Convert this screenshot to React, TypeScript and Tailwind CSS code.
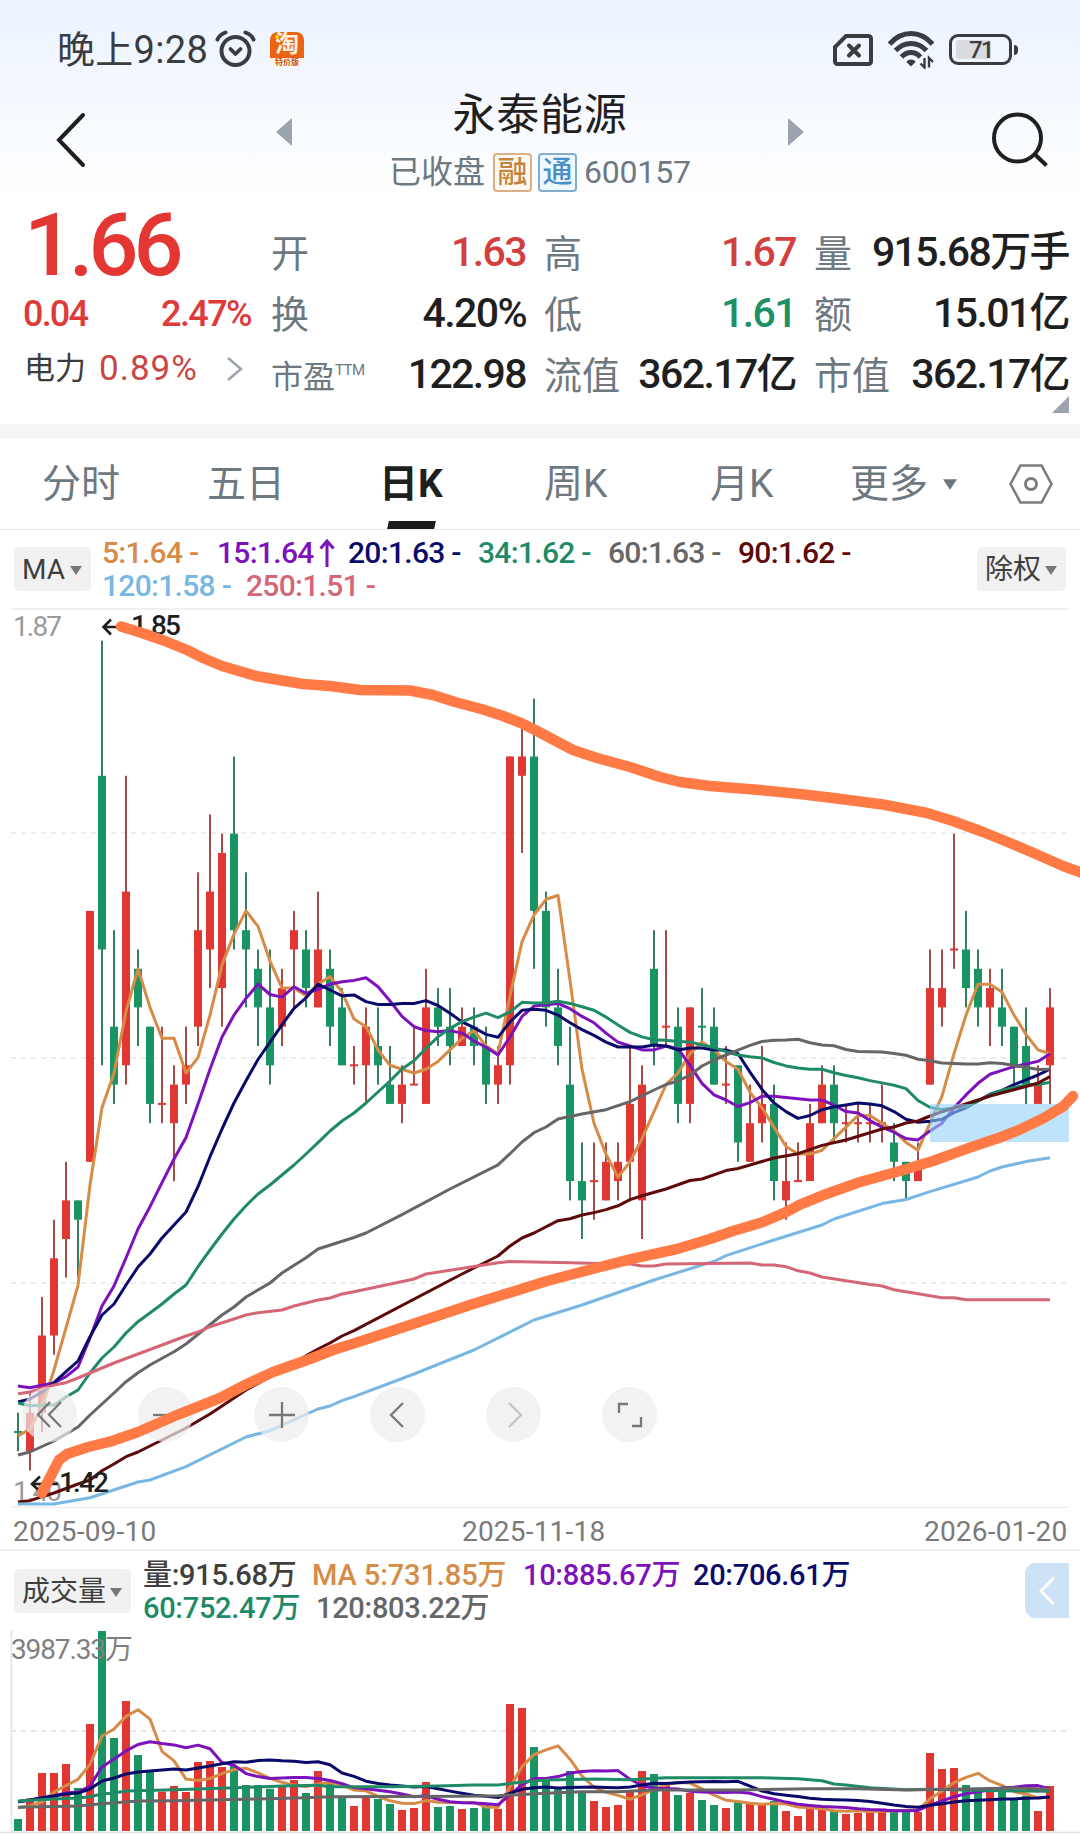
import { type ReactNode } from "react";
import clsx from "clsx";

type Candle = [
  color: "r" | "g",
  high: number,
  top: number,
  bottom: number,
  low: number
];
type Point = [index: number, y: number];

// prices are in fen, one entry for each trading day
const CANDLES: Candle[] = [
  ["g", 145, 144, 144, 143],
  ["r", 146, 145, 143, 142],
  ["r", 151, 149, 145, 144],
  ["r", 155, 153, 149, 148],
  ["r", 158, 156, 154, 152],
  ["g", 156, 156, 155, 152],
  ["r", 171, 171, 158, 158],
  ["g", 185, 178, 169, 163],
  ["g", 170, 165, 162, 161],
  ["r", 178, 172, 163, 162],
  ["g", 169, 168, 166, 164],
  ["g", 165, 165, 161, 160],
  ["r", 165, 161, 161, 160],
  ["r", 163, 162, 160, 157],
  ["r", 165, 163, 162, 161],
  ["r", 173, 170, 165, 164],
  ["r", 176, 172, 169, 167],
  ["r", 175, 174, 167, 165],
  ["g", 179, 175, 170, 169],
  ["g", 173, 170, 169, 166],
  ["g", 169, 168, 166, 164],
  ["g", 169, 166, 163, 162],
  ["r", 168, 167, 165, 164],
  ["r", 171, 170, 169, 166],
  ["g", 170, 169, 167, 166],
  ["r", 172, 169, 166, 166],
  ["g", 169, 168, 165, 164],
  ["g", 167, 166, 163, 163],
  ["r", 164, 163, 163, 162],
  ["r", 166, 165, 163, 161],
  ["g", 166, 164, 163, 162],
  ["g", 164, 162, 161, 161],
  ["r", 163, 162, 161, 160],
  ["r", 165, 162, 162, 162],
  ["r", 168, 166, 161, 161],
  ["g", 167, 166, 165, 164],
  ["g", 167, 165, 164, 163],
  ["r", 166, 165, 164, 164],
  ["g", 166, 165, 164, 163],
  ["g", 165, 164, 162, 161],
  ["r", 164, 163, 162, 161],
  ["r", 179, 179, 163, 162],
  ["r", 181, 179, 178, 174],
  ["g", 182, 179, 171, 168],
  ["g", 172, 171, 166, 165],
  ["g", 168, 166, 164, 163],
  ["g", 165, 162, 157, 156],
  ["g", 159, 157, 156, 154],
  ["r", 159, 157, 157, 155],
  ["r", 159, 158, 156, 156],
  ["r", 159, 158, 157, 156],
  ["r", 164, 161, 158, 156],
  ["r", 163, 162, 156, 154],
  ["g", 170, 168, 164, 163],
  ["r", 170, 165, 165, 164],
  ["g", 166, 165, 161, 160],
  ["r", 166, 166, 161, 160],
  ["g", 167, 165, 165, 164],
  ["g", 166, 165, 162, 162],
  ["r", 164, 162, 162, 161],
  ["g", 163, 163, 159, 158],
  ["r", 162, 160, 158, 158],
  ["r", 164, 161, 160, 159],
  ["g", 162, 161, 157, 156],
  ["r", 159, 157, 156, 155],
  ["r", 159, 157, 157, 157],
  ["r", 161, 160, 157, 157],
  ["r", 163, 162, 160, 160],
  ["g", 163, 162, 160, 159],
  ["r", 161, 160, 160, 159],
  ["r", 161, 160, 160, 159],
  ["r", 161, 160, 160, 159],
  ["r", 162, 160, 160, 159],
  ["g", 160, 159, 158, 157],
  ["g", 158, 158, 157, 156],
  ["r", 159, 158, 157, 157],
  ["r", 169, 167, 162, 162],
  ["r", 169, 167, 166, 165],
  ["r", 175, 169, 169, 168],
  ["g", 171, 169, 167, 166],
  ["g", 169, 168, 166, 165],
  ["r", 168, 167, 166, 164],
  ["g", 168, 166, 165, 164],
  ["g", 165, 165, 163, 162],
  ["g", 166, 164, 162, 161],
  ["r", 163, 162, 161, 161],
  ["r", 167, 166, 163, 161],
];

// bar heights in thirds of a pixel
const VOLUMES = [
  36, 98, 174, 174, 201, 129, 321, 600, 279, 390, 228, 181, 118, 135, 117, 207,
  210, 192, 195, 138, 138, 127, 132, 153, 114, 180, 147, 99, 75, 102, 96, 81,
  63, 69, 147, 72, 75, 66, 69, 78, 66, 381, 369, 252, 150, 126, 180, 114, 90,
  72, 78, 123, 180, 171, 145, 108, 114, 93, 78, 69, 90, 87, 78, 90, 60, 45, 77,
  63, 60, 51, 54, 65, 67, 65, 60, 57, 234, 186, 189, 138, 119, 119, 119, 93,
  106, 60, 135,
];

const RED = "#e13733";
const GREEN = "#1b9464";
const CHART_FONT = "Roboto, 'Noto Sans CJK SC', sans-serif";

const xAt = (index: number) => 18 + index * 12;
const priceY = (fen: number) => 640.7 + (185 - fen) * 19.3;
const volumeY = (height: number) => 1831 - height / 3;

const closes = CANDLES.map(([color, , top, bottom]) =>
  color === "r" ? top : bottom
);

const movingAverage = (
  values: number[],
  days: number,
  toY: (value: number) => number
): Point[] =>
  values.slice(days - 1).map((_, i) => {
    const sum = values.slice(i, i + days).reduce((a, b) => a + b, 0);
    return [i + days - 1, toY(sum / days)];
  });

const toPoints = (points: Point[]) =>
  points.map(([i, y]) => `${xAt(i)},${y.toFixed(1)}`).join(" ");

const seq = (...ys: number[]): Point[] => ys.map((y, i) => [i, y]);

const PRICE_LINES: { color: string; points: Point[] }[] = [
  {
    color: "#d68b47",
    points: [
      ...seq(1436, 1429, 1407, 1370),
      ...movingAverage(closes, 5, priceY),
    ],
  },
  {
    color: "#7d12bd",
    points: [
      ...seq(
        1386, 1387.7, 1385.3, 1383, 1376.7, 1367, 1338, 1306, 1286, 1258, 1229,
        1206.7, 1182.7, 1159
      ),
      ...movingAverage(closes, 15, priceY),
    ],
  },
  {
    color: "#0a0a6b",
    points: [
      ...seq(
        1402, 1399, 1392, 1382.7, 1371.7, 1361, 1336.7, 1315, 1304, 1285, 1267,
        1254, 1238, 1225, 1212, 1186.7, 1156.7, 1129, 1103
      ),
      ...movingAverage(closes, 20, priceY),
    ],
  },
  {
    color: "#1f8a66",
    points: [
      [0, 1403], [1, 1405.7], [3, 1405], [4, 1397], [5, 1390], [6, 1373],
      [7, 1358], [8, 1347], [9, 1333], [10, 1321.7], [12, 1304], [13, 1294],
      [14, 1285], [15, 1266.7], [16, 1250], [17, 1234], [18, 1219],
      [19, 1205.7], [20, 1194], [21, 1185], [23, 1165], [24, 1154],
      [25, 1142.7], [26, 1131], [27, 1121], [28, 1113], [29, 1103],
      [31, 1081], [32, 1069],
      ...movingAverage(closes, 34, priceY),
    ],
  },
  {
    color: "#666666",
    points: [
      [0, 1455], [1, 1452], [3, 1441], [5, 1427], [6, 1415], [8, 1393],
      [9, 1381.7], [10, 1372.7], [11, 1365], [13, 1351.7], [14, 1344],
      [17, 1315], [18, 1307], [19, 1297], [21, 1283], [22, 1273], [24, 1257.7],
      [25, 1249], [28, 1237.5], [29, 1233], [32, 1214.6], [36, 1189],
      [40, 1164.8], [41, 1153.7], [42, 1142], [43, 1132.7], [44, 1127],
      [45, 1119], [47, 1114], [49, 1109.7], [51, 1101.7], [53, 1090],
      [54, 1084.5], [55, 1081], [56, 1075], [57, 1066], [58, 1060],
      ...movingAverage(closes, 60, priceY),
    ],
  },
  {
    color: "#5e0a0a",
    points: [
      [0, 1502], [1, 1500.7], [2, 1496.7], [3, 1493], [5, 1484], [6, 1480],
      [7, 1470.7], [8, 1464], [9, 1456.7], [10, 1452], [14, 1428], [16, 1414],
      [19, 1390], [21, 1377], [24, 1355.7], [25, 1349], [26, 1343], [27, 1336],
      [28, 1330.7], [37, 1274], [38, 1268], [40, 1256], [41, 1246], [42, 1238],
      [43, 1233], [45, 1220.7], [46, 1218.8], [47, 1215], [48, 1212.6],
      [49, 1209.6], [50, 1205.8], [51, 1199.6], [52, 1195.8], [54, 1189],
      [56, 1180.5], [57, 1179], [59, 1170.6], [60, 1168.5], [63, 1158],
      [65, 1153.7], [67, 1145.4], [69, 1140], [72, 1129], [73, 1127],
      [74, 1123], [75, 1121], [76, 1116], [77, 1111.7], [80, 1100],
      [81, 1096], [84, 1086.5], [85, 1083], [86, 1076.6],
    ],
  },
  {
    color: "#78b7e3",
    points: [
      [0, 1504], [3, 1504], [6, 1497.7], [10, 1482], [11, 1480], [14, 1466.7],
      [19, 1437], [21, 1430.7], [25, 1409], [26, 1406], [27, 1400.7],
      [28, 1396.7], [33, 1374], [38, 1350], [43, 1320], [47, 1305], [53, 1280],
      [57, 1265], [58, 1261.5], [59, 1255.6], [63, 1240], [67, 1225],
      [68, 1219], [72, 1203.6], [74, 1199.5], [76, 1191.6], [80, 1177],
      [81, 1171], [82, 1167], [84, 1161.6], [86, 1157.8],
    ],
  },
  {
    color: "#d56678",
    points: [
      [0, 1393.7], [1, 1392], [3, 1385], [4, 1382.7], [5, 1378], [8, 1363],
      [14, 1336], [15, 1332], [16, 1326.7], [19, 1315], [20, 1312.7],
      [22, 1310], [23, 1306], [25, 1300], [26, 1298], [27, 1294],
      [28, 1291.7], [33, 1279], [34, 1274], [40, 1262.8], [41, 1261.6],
      [46, 1262.8], [50, 1264], [51, 1264], [52, 1266], [53, 1266],
      [54, 1264], [61, 1263], [62, 1265], [63, 1265], [64, 1266.7],
      [65, 1270.8], [66, 1273], [67, 1277], [71, 1284.6], [72, 1286],
      [73, 1289.8], [77, 1297.7], [78, 1297.7], [79, 1299.7], [86, 1299.7],
    ],
  },
];

const VOLUME_LINES: { color: string; points: Point[] }[] = [
  {
    color: "#d68b47",
    points: [
      ...seq(1807.7, 1806, 1802, 1792),
      ...movingAverage(VOLUMES, 5, volumeY),
    ],
  },
  {
    color: "#7d12bd",
    points: [
      ...seq(1801.7, 1800, 1797.7, 1795.7, 1793, 1792, 1786, 1767, 1759),
      ...movingAverage(VOLUMES, 10, volumeY),
    ],
  },
  {
    color: "#0a0a6b",
    points: [
      ...seq(
        1801.7, 1800, 1798, 1796, 1794, 1793, 1789, 1781, 1778, 1774, 1772,
        1771, 1770, 1769, 1770, 1768, 1766, 1763.7, 1761.7
      ),
      ...movingAverage(VOLUMES, 20, volumeY),
    ],
  },
  {
    color: "#1f8a66",
    points: [
      [0, 1801], [3, 1799], [5, 1798], [6, 1796.7], [7, 1794], [8, 1793],
      [9, 1791], [13, 1789.7], [15, 1789], [20, 1787], [22, 1786],
      [25, 1785.3], [26, 1786.7], [31, 1786.7], [35, 1786], [38, 1785],
      [40, 1785], [42, 1782], [44, 1780], [48, 1779], [51, 1779.7],
      [54, 1777.7], [62, 1777.7], [65, 1778.7], [67, 1780.7], [68, 1784],
      [69, 1785], [71, 1787.7], [74, 1789.7], [76, 1789.3], [82, 1790.7],
      [86, 1791.3],
    ],
  },
  {
    color: "#666666",
    points: [
      [0, 1807.3], [5, 1806], [7, 1803.7], [10, 1801], [13, 1800.7],
      [20, 1799], [24, 1797.7], [26, 1796.7], [37, 1796.3], [40, 1795.7],
      [44, 1793.3], [47, 1791.7], [50, 1791.7], [53, 1790], [60, 1790],
      [66, 1788.7], [70, 1788.7], [74, 1790], [80, 1788.7], [83, 1788],
      [86, 1789.3],
    ],
  },
];

// hand drawn trend lines
const TREND_TOP =
  "121,626.5 142,633 165,641 187,650 203,658 222,666 256,676 282,680.5 303,684 330,686 360,690 410,690.5 433,695 455,702 483,709.5 503,716 522,723.5 537,731 553,739.5 573,750 597,758 630,767 660,777 680,782 710,786 760,790 800,794 833,798 883,804.5 927,813 953,821 983,832 1010,843 1037,854.5 1063,866 1084,873.5";
const TREND_BOTTOM =
  "42,1493 59,1460 67,1454 88,1447 110,1441.7 138,1432 173,1416.7 220,1398 247,1384 273,1372 310,1359 333,1350 360,1341.5 410,1325 470,1305 547,1281 600,1267 633,1258.6 677,1249 710,1239 733,1231 763,1222 787,1211.6 800,1204.7 827,1193.7 860,1182 900,1171 933,1161 967,1148.6 1000,1137.5 1020,1129.6 1043,1118.6 1063,1106.6 1073,1096";

const Caret = ({ className }: { className?: string }) => (
  <svg viewBox="0 0 12 9" className={clsx("h-[9px] w-3", className)}>
    <path d="M0 0h12L6 9z" fill="currentColor" />
  </svg>
);

const StatusBar = () => (
  <div className="flex h-[98px] items-center justify-between pl-[57px] pr-[62px] text-[#3b3c3f]">
    <div className="flex items-center">
      <span className="w-[153px] whitespace-nowrap pt-[2px] text-[38px] leading-[48px] tracking-[0.3px]">
        晚上9:28
      </span>
      <svg viewBox="0 0 42 40" className="ml-1 h-10 w-[42px]" fill="none">
        <circle cx="21.5" cy="22" r="14" stroke="#3b3c3f" strokeWidth="4" />
        <path
          d="M3.500 10.500c1-3 4-5.500 8-7M39.500 10.500c-1-3-4-5.500-8-7"
          stroke="#3b3c3f"
          strokeWidth="4"
          strokeLinecap="round"
        />
        <path
          d="M16.500 20l5 5 5-5"
          stroke="#3b3c3f"
          strokeWidth="3.800"
          strokeLinecap="round"
          strokeLinejoin="round"
        />
      </svg>
      <div className="ml-[14px] flex h-[35px] w-[34px] flex-col rounded-lg bg-[#fff3e8] text-center">
        <div className="relative h-[26px] rounded-t-lg bg-[#ea6213] text-[24px] font-bold leading-[25px] text-[#fff2dc]">
          淘
          <span className="absolute left-[5px] top-[3px] h-1 w-1 rounded-full bg-[#ffe100]"></span>
        </div>
        <span className="whitespace-nowrap text-[8px] font-bold leading-[9px] text-[#c1560f]">
          特价版
        </span>
      </div>
    </div>
    <div className="flex items-center pt-[1px]">
      <svg viewBox="0 0 40 32" className="h-8 w-10" fill="none">
        <path
          d="M13 2h22.500a2.500 2.500 0 0 1 2.500 2.500v23a2.500 2.500 0 0 1-2.500 2.500h-31A2.500 2.500 0 0 1 2 27.500V13z"
          stroke="#3b3c3f"
          strokeWidth="4"
        />
        <path
          d="M16 11.500l10 10M26 11.500l-10 10"
          stroke="#3b3c3f"
          strokeWidth="4"
          strokeLinecap="round"
        />
      </svg>
      <svg viewBox="0 0 46 38" className="ml-[15px] h-[38px] w-[46px]" fill="none">
        <g stroke="#3b3c3f" strokeWidth="5">
          <path d="M1.500 13C14-1 32-1 44.500 13" />
          <path d="M7.500 19.500C16.500 10 29.500 10 38.500 19.500" />
          <path d="M13.500 26c5.500-6 13.500-6 19 0" />
        </g>
        <path d="M23 28.500c2.500 0 4 1 4.500 2.500L23 35.500 18.500 31c.5-1.500 2-2.500 4.500-2.500z" fill="#3b3c3f" />
        <path
          d="M36.500 27v9.500l-4-4M41 36.500V27l4 4"
          stroke="#3b3c3f"
          strokeWidth="2.400"
        />
      </svg>
      <div className="ml-[15px] flex h-[31px] w-[63px] items-center rounded-[9px] border-[3px] border-[#3b3c3f] p-[4px]">
        <div className="relative h-[19px] w-[35px] rounded-[3px] bg-[#d9dbdf]">
          <span className="absolute left-[13px] top-0 text-[24px] font-medium leading-[20px] tracking-[-2px]">
            71
          </span>
        </div>
      </div>
      <span className="ml-[2px] h-[10px] w-1 rounded-r-sm bg-[#3b3c3f]"></span>
    </div>
  </div>
);

const TitleBar = () => (
  <div className="flex h-[104px] justify-between pl-[56px] pr-[32px]">
    <div className="flex">
      <svg viewBox="0 0 32 56" className="mt-[14px] h-14 w-8" fill="none">
        <path
          d="M27 3L3 28 27 53"
          stroke="#1f1f1f"
          strokeWidth="4"
          strokeLinecap="round"
        />
      </svg>
      <svg viewBox="0 0 16 28" className="ml-[188px] mt-[20px] h-7 w-4">
        <path d="M16 0v28L0 14z" fill="#9ba3ae" />
      </svg>
    </div>
    <div className="flex flex-col items-center">
      <h1 className="-mt-[9px] whitespace-nowrap text-[43px] leading-[52px] tracking-[0.8px] text-[#1f1f1f]">
        永泰能源
      </h1>
      <div className="mt-[11px] flex items-center whitespace-nowrap text-[32px] leading-[40px] text-[#6d7880]">
        <span className="w-[104px]">已收盘</span>
        <span className="flex h-[39px] w-[39px] items-center justify-center rounded-[4px] border-2 border-[#dcae86] bg-[#fef9f2] text-[30px] font-medium text-[#c4843f]">
          融
        </span>
        <span className="ml-[6px] flex h-[39px] w-[39px] items-center justify-center rounded-[4px] border-2 border-[#84acd0] bg-[#eef8ff] text-[30px] font-medium text-[#4b8fc9]">
          通
        </span>
        <span className="ml-[7px] w-[107px] tracking-[-0.2px]">600157</span>
      </div>
    </div>
    <div className="flex">
      <svg viewBox="0 0 16 28" className="mr-[188px] mt-[20px] h-7 w-4">
        <path d="M0 0v28l16-14z" fill="#9ba3ae" />
      </svg>
      <svg viewBox="0 0 56 56" className="mt-[14px] h-14 w-14" fill="none">
        <circle cx="25.500" cy="26" r="23.500" stroke="#1f1f1f" strokeWidth="4" />
        <path d="M42.500 42l12 11.500" stroke="#1f1f1f" strokeWidth="4" />
      </svg>
    </div>
  </div>
);

const Quote = ({
  label,
  value,
  tone = "text-[#1f1f1f]",
}: {
  label: ReactNode;
  value: string;
  tone?: string;
}) => (
  <div className="flex items-center justify-between whitespace-nowrap">
    <span className="text-[38px] text-[#6d7880]">{label}</span>
    <span
      className={clsx(
        "pb-[3px] text-[41px] font-medium tracking-[-1.6px]",
        tone
      )}>
      {value}
    </span>
  </div>
);

const QuotePanel = () => (
  <div className="relative flex h-[222px] pl-[24px]">
    <div className="w-[228px] shrink-0 text-[#dd3b3a]">
      <div className="mt-[4px] text-[88px] font-medium leading-[78px] tracking-[-5px] text-[#e43734]">
        1.66
      </div>
      <div className="-ml-[1px] mr-[1px] mt-[9px] flex justify-between whitespace-nowrap text-[36px] leading-[42px] tracking-[-1.800px]">
        <span className="font-medium">0.04</span>
        <span className="font-medium tracking-[-1.6px]">2.47%</span>
      </div>
      <div className="mt-[13px] flex items-center whitespace-nowrap text-[35px] leading-[42px] tracking-[1px] text-[#c94644]">
        <span className="w-[75px] text-[31px] text-[#3b3c3f] tracking-[0px]">
          电力
        </span>
        <span className="w-[127px]">0.89%</span>
        <svg viewBox="0 0 18 26" className="h-[26px] w-[18px]" fill="none">
          <path d="M2 2l13 11L2 24" stroke="#9ba3ae" strokeWidth="2.500" />
        </svg>
      </div>
    </div>
    <div className="ml-[19px] mt-[22px] grid h-[183px] w-[799px] grid-cols-[255px_252px_255px] grid-rows-3 gap-x-[18px]">
      <Quote label="开" value="1.63" tone="text-[#d33f3e]" />
      <Quote label="高" value="1.67" tone="text-[#d33f3e]" />
      <Quote label="量" value="915.68万手" />
      <Quote label="换" value="4.20%" />
      <Quote label="低" value="1.61" tone="text-[#1f8f66]" />
      <Quote label="额" value="15.01亿" />
      <Quote
        label={
          <span className="flex items-start text-[32px] leading-[40px]">
            市盈
            <span className="text-[15px] leading-[26px] tracking-[-0.5px]">
              TTM
            </span>
          </span>
        }
        value="122.98"
      />
      <Quote label="流值" value="362.17亿" />
      <Quote label="市值" value="362.17亿" />
    </div>
    <svg viewBox="0 0 17 17" className="absolute bottom-[11px] right-[11px] h-[17px] w-[17px]">
      <path d="M17 0v17H0z" fill="#9ba3ae" />
    </svg>
  </div>
);

const TABS = [
  { label: "分时", width: "w-[165px]" },
  { label: "五日", width: "w-[172px]" },
  { label: "日K", width: "w-[165px]", active: true },
  { label: "周K", width: "w-[166px]" },
  { label: "月K", width: "w-[140px]" },
];

const TabBar = () => (
  <div className="flex h-[92px] items-center whitespace-nowrap border-b border-[#e6e6e6] pl-[42px] text-[39px] text-[#6d7880]">
    {TABS.map((tab) => (
      <div
        key={tab.label}
        className={clsx(
          "relative flex h-full shrink-0 items-center pt-[2px]",
          tab.width,
          tab.active && "font-bold text-[#1f1f1f]"
        )}>
        {tab.label}
        {tab.active && (
          <span className="absolute bottom-0 left-[9px] h-2 w-[47px] -skew-x-12 bg-[#1c1c1c]"></span>
        )}
      </div>
    ))}
    <div className="flex w-[159px] shrink-0 items-center pt-[2px]">
      更多
      <Caret className="ml-[15px] h-[11px] w-[14px]" />
    </div>
    <svg viewBox="0 0 44 40" className="h-10 w-11" fill="none">
      <path
        d="M11.500 1.500h21L42.500 20l-10 18.500h-21L1.500 20z"
        stroke="#7c7c7c"
        strokeWidth="2.600"
      />
      <circle cx="22" cy="20" r="5.500" stroke="#7c7c7c" strokeWidth="3" />
    </svg>
  </div>
);

const Pill = ({ className, children }: { className?: string; children: ReactNode }) => (
  <div
    className={clsx(
      "flex h-11 shrink-0 items-center justify-between whitespace-nowrap rounded-[5px] bg-[#f1f1f1] pl-[8px] pr-[9px] pt-[2px] text-[28px] text-[#3f3f3f]",
      className
    )}>
    {children}
    <Caret className="text-[#777777]" />
  </div>
);

const MaLegend = () => (
  <div className="flex h-[78px] items-start justify-between pl-[14px] pr-[14px]">
    <Pill className="mt-[17px] w-[77px]">MA</Pill>
    <div className="ml-[11px] mt-[6px] flex-1 whitespace-nowrap text-[30px] font-medium leading-[33px] tracking-[-0.7px]">
      <div className="flex">
        <span className="w-[115px] text-[#d68b47]">5:1.64 -</span>
        <span className="flex w-[131px] items-center text-[#7d12bd]">
          15:1.64
          <svg viewBox="0 0 16 28" className="ml-[5px] h-7 w-4" fill="none">
            <path d="M8 28V2M1.500 9.500L8 2l6.500 7.500" stroke="#7d12bd" strokeWidth="3" />
          </svg>
        </span>
        <span className="w-[130px] text-[#0a0a6b]">20:1.63 -</span>
        <span className="w-[130px] text-[#1f8a66]">34:1.62 -</span>
        <span className="w-[130px] text-[#666666]">60:1.63 -</span>
        <span className="w-[130px] text-[#5e0a0a]">90:1.62 -</span>
      </div>
      <div className="flex">
        <span className="w-[144px] text-[#78b7e3]">120:1.58 -</span>
        <span className="text-[#d56678]">250:1.51 -</span>
      </div>
    </div>
    <Pill className="mt-[17px] w-[89px]">除权</Pill>
  </div>
);

const ChartButton = ({ children }: { children: ReactNode }) => (
  <button className="flex h-[55px] w-[55px] items-center justify-center rounded-full bg-[#ececec]/70">
    <svg
      viewBox="0 0 28 28"
      className="h-7 w-7"
      fill="none"
      stroke="#777777"
      strokeWidth="2.300">
      {children}
    </svg>
  </button>
);

const PriceChart = () => (
  <div className="relative h-[900px]">
    <svg viewBox="0 608 1080 900" className="block h-[900px] w-[1080px]">
      <g stroke="#ececec" strokeWidth="2">
        <path d="M11 609H1069M11 1507.500H1069" strokeWidth="1.500" />
        <path d="M11 833H1067M11 1058H1067M11 1283H1067" strokeDasharray="5 5" />
      </g>
      <text x="13" y="636" fontFamily={CHART_FONT} fontSize="28" fill="#9a9a9a" textLength="49">
        1.87
      </text>
      <text x="13" y="1501" fontFamily={CHART_FONT} fontSize="28" fill="#9a9a9a" textLength="49">
        1.40
      </text>
      {CANDLES.map(([color, high, top, bottom, low], i) => (
        <g key={i}>
          <rect
            x={xAt(i) - 1}
            y={priceY(high)}
            width="2"
            height={priceY(low) - priceY(high)}
            fill={color === "r" ? "#a94a47" : "#357e60"}
          />
          <rect
            x={xAt(i) - 4}
            y={priceY(top) - (top === bottom ? 1 : 0)}
            width="8"
            height={Math.max(2, priceY(bottom) - priceY(top))}
            fill={color === "r" ? RED : GREEN}
          />
        </g>
      ))}
      {PRICE_LINES.map(({ color, points }) => (
        <polyline
          key={color}
          points={toPoints(points)}
          fill="none"
          stroke={color}
          strokeWidth="3"
          strokeLinejoin="round"
        />
      ))}
      <rect x="930" y="1104" width="139" height="38" fill="#93d0fc" fillOpacity="0.6" />
      <g fontFamily={CHART_FONT} fontSize="28" fontWeight="500" fill="#1f1f1f">
        <path d="M120 627H103M111 619.500L103.500 627l7.500 7.500" stroke="#1f1f1f" strokeWidth="2.600" fill="none" />
        <text x="131" y="635" textLength="50">
          1.85
        </text>
        <path d="M58 1484H32M40 1476.500L32 1484l8 7.500" stroke="#1f1f1f" strokeWidth="2.600" fill="none" />
        <text x="59" y="1492" textLength="50">
          1.42
        </text>
      </g>
    </svg>
    <div className="absolute bottom-[66px] left-[22px] flex gap-[61px]">
      <ChartButton>
        <path d="M14 1L2 13.500 14 26M25 1L13 13.500 25 26" />
      </ChartButton>
      <ChartButton>
        <path d="M1 14h26" />
      </ChartButton>
      <ChartButton>
        <path d="M1 14h26M14 1v26" />
      </ChartButton>
      <ChartButton>
        <path d="M19 2L7 14l12 12" />
      </ChartButton>
      <ChartButton>
        <path d="M9 2l12 12L9 26" stroke="#c4c4c4" />
      </ChartButton>
      <ChartButton>
        <path d="M3 12V3h9M25 16v9h-9" />
      </ChartButton>
    </div>
    <svg
      viewBox="0 608 1080 900"
      className="pointer-events-none absolute inset-0 h-[900px] w-[1080px]"
      fill="none"
      stroke="#ff7a45"
      strokeWidth="10.500"
      strokeLinecap="round"
      strokeLinejoin="round">
      <polyline points={TREND_TOP} />
      <polyline points={TREND_BOTTOM} />
    </svg>
  </div>
);

const VolumeLegend = () => (
  <div className="flex h-[79px] items-start pl-[14px] pr-[11px]">
    <Pill className="mt-[18px] w-[117px]">成交量</Pill>
    <div className="ml-[12px] mt-[8px] flex-1 whitespace-nowrap text-[29px] font-medium leading-[33px] tracking-[-0.3px]">
      <div className="flex">
        <span className="w-[169px] text-[#3f3f3f]">量:915.68万</span>
        <span className="w-[211px] text-[#d68b47] tracking-[-0.1px]">
          MA 5:731.85万
        </span>
        <span className="w-[170px] text-[#7d12bd]">10:885.67万</span>
        <span className="text-[#0a0a6b]">20:706.61万</span>
      </div>
      <div className="flex">
        <span className="w-[173px] text-[#1f8a66]">60:752.47万</span>
        <span className="text-[#666666]">120:803.22万</span>
      </div>
    </div>
    <button className="mt-[12px] flex h-[55px] w-11 items-center justify-center rounded-l-[11px] bg-[#cde2f7]">
      <svg viewBox="0 0 16 28" className="h-7 w-4" fill="none">
        <path d="M14 1.500L2 14l12 12.500" stroke="#fff" strokeWidth="2.800" strokeLinecap="round" />
      </svg>
    </button>
  </div>
);

const VolumeChart = () => (
  <svg viewBox="0 1630 1080 214" className="block h-[214px] w-[1080px]">
    <path d="M11.500 1630V1832M0 1832.500H1080" stroke="#e2e2e2" strokeWidth="1.500" />
    <path d="M11 1731H1067" stroke="#e6e6e6" strokeWidth="2" strokeDasharray="5 5" />
    {VOLUMES.map((height, i) => (
      <rect
        key={i}
        x={xAt(i) - 4}
        y={volumeY(height)}
        width="8"
        height={height / 3}
        fill={CANDLES[i][0] === "r" ? RED : GREEN}
      />
    ))}
    {VOLUME_LINES.map(({ color, points }) => (
      <polyline
        key={color}
        points={toPoints(points)}
        fill="none"
        stroke={color}
        strokeWidth="3"
        strokeLinejoin="round"
      />
    ))}
    <text x="11" y="1659" fontFamily={CHART_FONT} fontSize="28" fill="#7f7f7f" textLength="122">
      3987.33万
    </text>
  </svg>
);

const App = () => (
  <div className="flex h-[1844px] w-[1080px] flex-col overflow-hidden bg-white font-[Roboto,'Noto_Sans_CJK_SC',sans-serif]">
    <div className="bg-linear-to-b from-[#ebf3fe] to-white">
      <StatusBar />
      <TitleBar />
    </div>
    <QuotePanel />
    <div className="h-[14px] bg-[#f4f4f4]"></div>
    <TabBar />
    <MaLegend />
    <PriceChart />
    <div className="flex h-[43px] items-center border-b-2 border-[#f0f0f0] pl-[13px] pt-[6px] text-[28px] tracking-[0.2px] text-[#7a7a7a]">
      <span className="w-[449px]">2025-09-10</span>
      <span className="w-[462px]">2025-11-18</span>
      <span>2026-01-20</span>
    </div>
    <VolumeLegend />
    <VolumeChart />
  </div>
);

export default App;
